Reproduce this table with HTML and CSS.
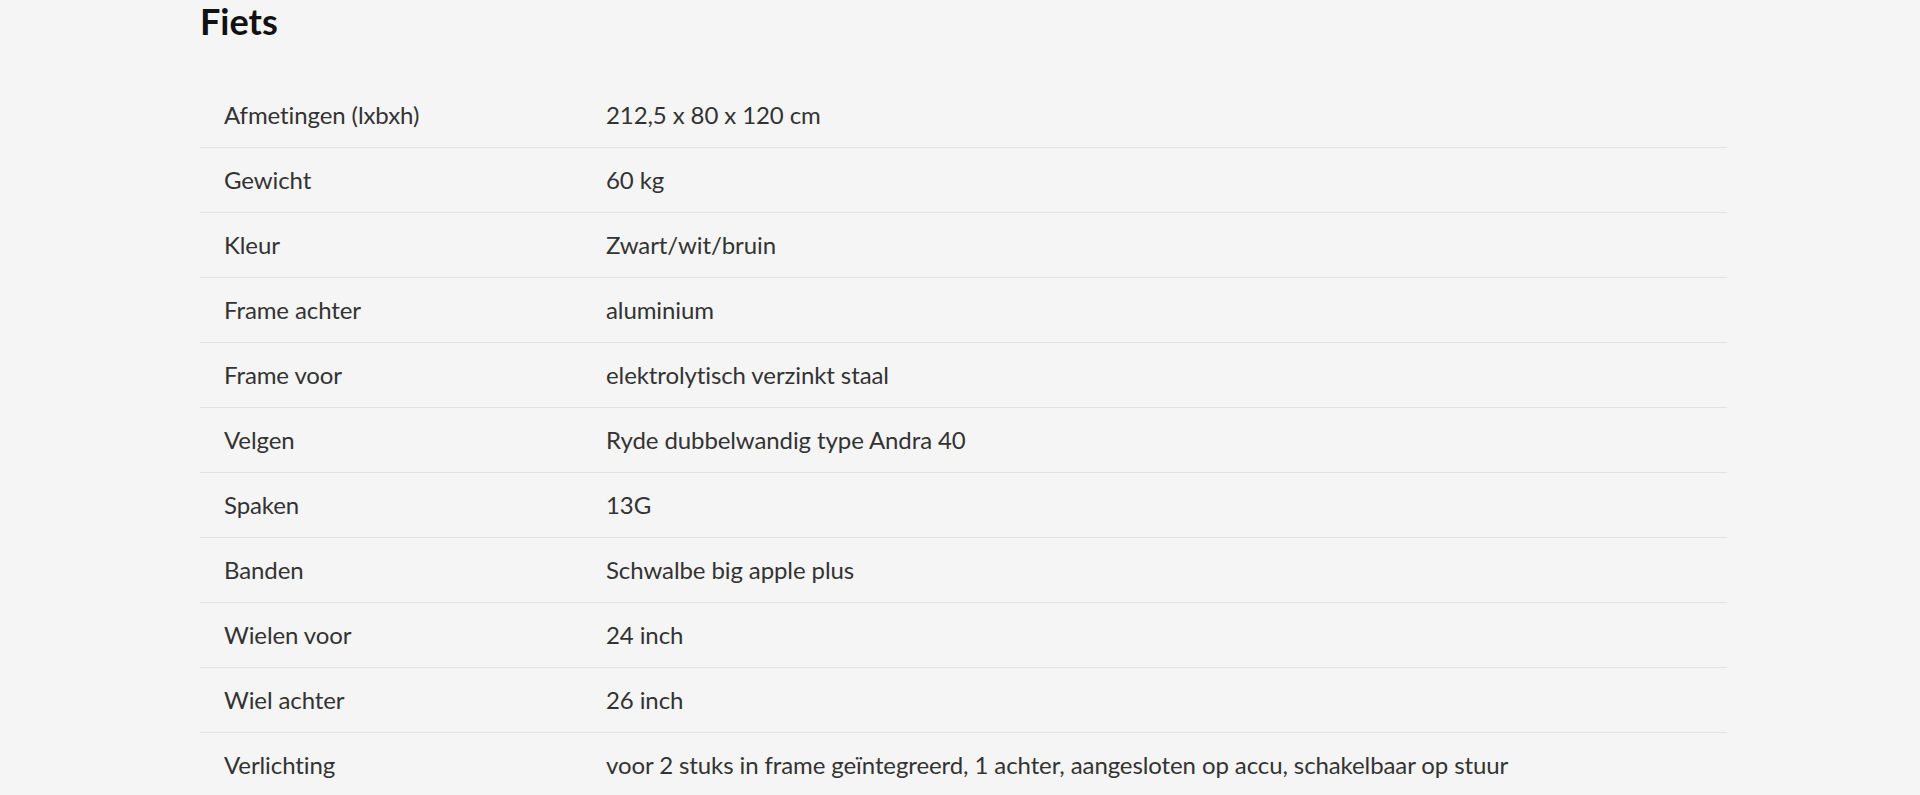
FILE: index.html
```html
<!DOCTYPE html>
<html lang="nl">
<head>
<meta charset="utf-8">
<title>Fiets</title>
<link rel="stylesheet" href="styles.css">
</head>
<body>
<main class="page">
  <h2 class="title">Fiets</h2>
  <dl class="specs">
    <div class="row"><dt>Afmetingen (lxbxh)</dt><dd>212,5 x 80 x 120 cm</dd></div>
    <div class="row"><dt>Gewicht</dt><dd>60 kg</dd></div>
    <div class="row"><dt>Kleur</dt><dd>Zwart/wit/bruin</dd></div>
    <div class="row"><dt>Frame achter</dt><dd>aluminium</dd></div>
    <div class="row"><dt>Frame voor</dt><dd>elektrolytisch verzinkt staal</dd></div>
    <div class="row"><dt>Velgen</dt><dd>Ryde dubbelwandig type Andra 40</dd></div>
    <div class="row"><dt>Spaken</dt><dd>13G</dd></div>
    <div class="row"><dt>Banden</dt><dd>Schwalbe big apple plus</dd></div>
    <div class="row"><dt>Wielen voor</dt><dd>24 inch</dd></div>
    <div class="row"><dt>Wiel achter</dt><dd>26 inch</dd></div>
    <div class="row"><dt>Verlichting</dt><dd>voor 2 stuks in frame geïntegreerd, 1 achter, aangesloten op accu, schakelbaar op stuur</dd></div>
  </dl>
</main>
</body>
</html>
```

FILE: styles.css
```css
html, body {
  margin: 0;
  padding: 0;
  background: #f5f5f5;
}
body {
  font-family: Lato, "Open Sans", sans-serif;
  color: #333333;
}
.page {
  width: 1527px;
  margin-left: 200px;
}
.title {
  margin: 0;
  font-size: 36px;
  line-height: 43px;
  font-weight: 700;
  color: #111111;
  padding-bottom: 40px;
}
.specs {
  margin: 0;
}
.row {
  display: grid;
  grid-template-columns: 406px 1fr;
  border-bottom: 1px solid #e2e2e2;
}
.row dt, .row dd {
  margin: 0;
  font-size: 24px;
  line-height: 24px;
  letter-spacing: -0.1px;
  padding: 20px 0;
}
.row dt {
  padding-left: 24px;
}
```
